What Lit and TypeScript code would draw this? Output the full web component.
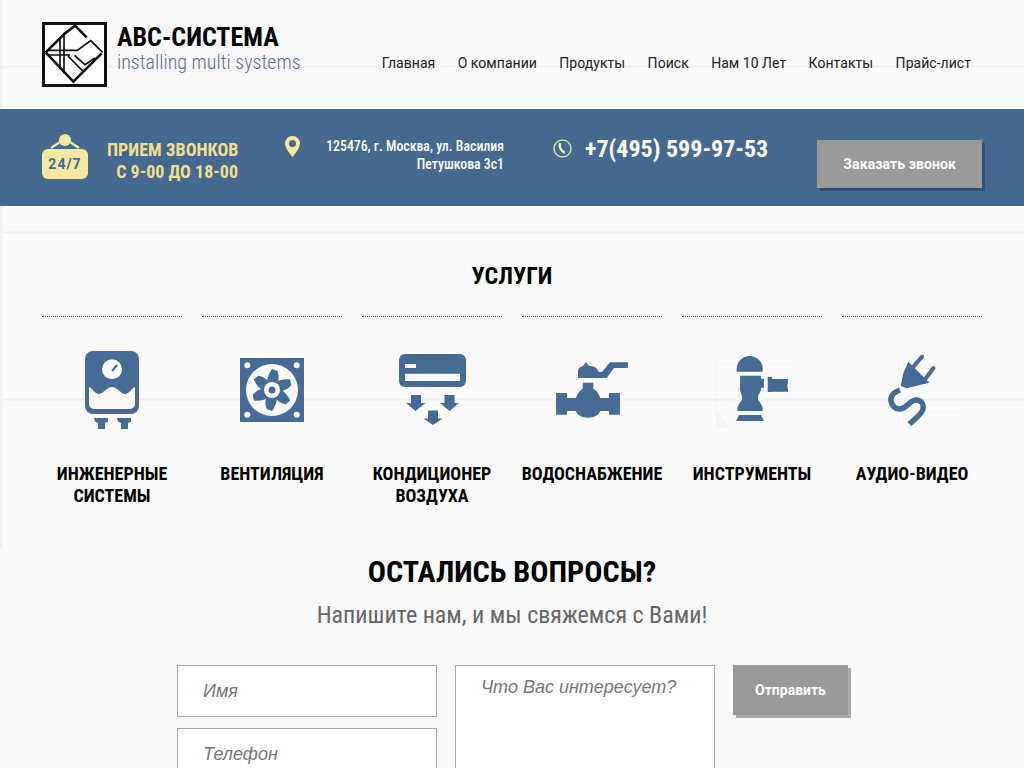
import { LitElement, html, css, svg } from "lit";
import { customElement } from "lit/decorators.js";

const INK = "#456b96";
const PAPER = "#fafafa";

/* Each icon is drawn on a 100x92 canvas centred on its column. */
const blade = "M-5 -7C-5 -12 -3 -17 0 -21L5.500 -19C7 -15 7 -11 5.500 -6.500Z";
const icons = [
  svg`<path fill="${INK}" d="M31 0h38a8 8 0 0 1 8 8v47a8 8 0 0 1-8 8H31a8 8 0 0 1-8-8V8a8 8 0 0 1 8-8z"/>
    <path fill="${PAPER}" d="M27 36c3 1 6 7 10 7s8-7 13-7 9 7 13 7 7-6 10-7v17a5 5 0 0 1-5 5H32a5 5 0 0 1-5-5z"/>
    <circle cx="50" cy="18.300" r="10" fill="${PAPER}"/><path stroke="${INK}" stroke-width="2" d="M50 20l5-6"/>
    <path fill="${INK}" d="M32 67h14v3.500l-3 1.500V78h-7v-6l-3-1.500zM55 67h14v3.500l-3 1.500V78h-7v-6l-3-1.500z"/>`,
  svg`<path fill="${INK}" d="M18 7h64v64H18z"/><circle cx="50" cy="39" r="26" fill="${PAPER}"/>
    <circle cx="25.300" cy="14.300" r="3" fill="${PAPER}"/><circle cx="74.700" cy="14.300" r="3" fill="${PAPER}"/><circle cx="25.300" cy="63.700" r="3" fill="${PAPER}"/><circle cx="74.700" cy="63.700" r="3" fill="${PAPER}"/>
    <g transform="translate(50 39)"><g fill="${INK}">${[0, 60, 120, 180, 240, 300].map((a) => svg`<path transform="rotate(${a})" d="${blade}"/>`)}</g><circle r="8" fill="${PAPER}"/><circle r="3.500" fill="${INK}"/></g>`,
  svg`<path fill="${INK}" fill-rule="evenodd" d="M23 3h55a6 6 0 0 1 6 6v21a6 6 0 0 1-6 6H23a6 6 0 0 1-6-6V9a6 6 0 0 1 6-6zM23 22.700V30h55v-7.300zM23 13v4h11v-4z"/>
    <path fill="${INK}" d="M29 44h10v8h4.500L33.500 60 24 52h5zM62.500 44h10v8H77L67.500 60 58 52h4.500zM46 59.500h10v8h4.500L51 74l-9.500-6.500H46z"/>`,
  svg`<path fill="${INK}" d="M36 27V20c0-3 2-4 5-5l3-4 3 4c4 0 8 1 9 5l1 1h3l8-9.700h18V17H72l-7.300 10z"/>
    <path fill="${INK}" d="M40.700 31.700h10.600V38c3 1.500 5 3.500 7 9H67V42h11v21.700H67V60h-8.500c-2 4-6 6.700-12.500 6.700S35.500 64 33.500 60H25v3.700H14V42h11v5h9c2-5.500 4-7.500 6.700-9z"/>`,
  svg`<g fill="#eeeeee" opacity=".55"><path d="M13 12h77v1H13zM13 12h1v65h-1zM55 8h1v70h-1zM60 8h1v70h-1zM13 77h16L13 58z"/></g><rect x="33" y="4" width="30" height="72" fill="${PAPER}" opacity=".9"/>
    <path fill="${INK}" d="M34.700 20.700V18a13 13 0 0 1 26 0v2.700zM38 24.700h21v3h3v9h-3V39l-3 6v4l2 2.500 2.500 4.500v4H35.500v-4l2.500-4.500 2-2.500v-4l-2-6zM65.700 26h4.300v2h16.300l-1 7 1 5.700H70v.300h-4.300zM37 64h22l3 6H34z"/>`,
  svg`<g fill="#eeeeee" opacity=".5"><path d="M36 2h1v75h-1zM52 60h50v1H52z"/></g>
    <path fill="${INK}" d="M46.300 10.700L67.300 31.700 58 34 44.700 37.300 38.700 35 41.300 22.300z"/>
    <path fill="none" stroke="${INK}" stroke-width="4" stroke-linecap="round" d="M50 17.300L60.200 5.500M61.300 30.700L71.500 17"/>
    <path fill="none" stroke="${INK}" stroke-width="5.500" d="M38 39C30 42 27 47 30 53C33 59 39 59 43 56C47 53 50 49 54 49C59 49 62 53 61 58C60 63 53 68 47.300 73"/>`,
];

@customElement("app-root")
export class AppRoot extends LitElement {
  static styles = css`
    :host { display: block; width: 1024px; height: 768px; overflow: hidden; font-family: Roboto, "Liberation Sans", sans-serif; color: #000; }
    .wood { background-color: #fafafa; }
    .wood-a { background-image:
        linear-gradient(90deg, #f0f0f0 0 2px, transparent 3px),
        linear-gradient(180deg, transparent 0 65px, #f0f0f0 66px 67px, transparent 68px); }
    .wood-b { background-image:
        linear-gradient(90deg, #f0f0f0 0 2px, transparent 3px),
        linear-gradient(180deg, transparent 0 25px, #efefef 26px 27px, transparent 28px),
        linear-gradient(180deg, transparent 0 192px, #efefef 193px 194px, transparent 195px); }
    header { height: 109px; box-sizing: border-box; padding: 22px 53px 0 42px; display: flex; }
    .logo { width: 65px; height: 65px; flex: none; margin-right: 10px; }
    .brand { padding-top: 1px; }
    .brand b { display: block; font-size: 26px; line-height: 28px; font-weight: 700; font-stretch: 87%; white-space: nowrap; }
    .brand span { display: block; font-size: 20px; line-height: 22px; font-weight: 300; color: #5c6f88; font-stretch: 87%; white-space: nowrap; }
    nav { margin-left: auto; display: flex; gap: 22.400px; padding-top: 32px; font-size: 14px; line-height: 18px; letter-spacing: .04px; color: #222; white-space: nowrap; }
    .bar { height: 97px; background: #45698f; display: flex; color: #fff; }
    .bar > div { flex: none; }
    .clock { margin: 25px 0 0 42px; width: 46px; }
    .hours { margin: 30px 0 0 19px; width: 131px; text-align: right; font-size: 18px; line-height: 22px; font-weight: 700; color: #f0df8e; font-stretch: 75%; white-space: nowrap; }
    .pin { margin: 27px 0 0 47px; }
    .addr { margin: 28px 0 0 0; width: 204px; text-align: right; font-size: 13.800px; line-height: 18px; font-weight: 500; font-stretch: 87%; white-space: nowrap; }
    .phone { margin: 30px 0 0 49px; }
    .num { margin: 24px 0 0 13px; font-size: 24px; line-height: 32px; font-weight: 700; font-stretch: 87%; white-space: nowrap; }
    .btn { background: #999; color: #fff; font-weight: 700; text-align: center; white-space: nowrap; }
    .call { margin: 31px 0 0 49px; width: 165px; height: 48px; line-height: 48px; font-size: 14px; letter-spacing: .1px; box-shadow: 3px 3px 0 #2f4f72; }
    .services { height: 343px; box-sizing: border-box; padding: 55px 42px 0; }
    h2 { margin: 0; text-align: center; font-size: 24px; line-height: 30px; font-weight: 700; font-stretch: 75%; }
    .grid { display: grid; grid-template-columns: repeat(6, 140px); gap: 20px; margin-top: 25px; }
    .col { border-top: 1px dotted #555; padding-top: 34px; display: flex; flex-direction: column; align-items: center; }
    .ic { width: 100px; height: 92px; display: block; }
    .col p { margin: 20px -10px 0; font-size: 18px; line-height: 22px; font-weight: 700; font-stretch: 75%; text-align: center; white-space: pre-line; }
    .ask { background: #f9f9f9; height: 219px; box-sizing: border-box; padding-top: 8px; text-align: center; }
    h3 { margin: 0; font-size: 30.200px; line-height: 30px; font-weight: 700; font-stretch: 75%; }
    .sub { margin: 13px 0 0; font-size: 24px; line-height: 30px; font-weight: 400; color: #666; font-stretch: 75%; }
    form { display: flex; gap: 18px; margin: 35px 0 0 177px; text-align: left; }
    .stack { display: flex; flex-direction: column; gap: 11px; }
    .f { box-sizing: border-box; width: 260px; height: 52px; background: #fff; border: 1px solid #aaa; padding: 0 25px; font: italic 18px/50px "Liberation Sans", sans-serif; color: #777; }
    .area { height: 180px; line-height: 42px; }
    .send { width: 115px; height: 50px; line-height: 50px; font-size: 14px; box-shadow: 3px 3px 0 #aaa; }
  `;

  render() {
    const items = ["ИНЖЕНЕРНЫЕ\nСИСТЕМЫ", "ВЕНТИЛЯЦИЯ", "КОНДИЦИОНЕР\nВОЗДУХА", "ВОДОСНАБЖЕНИЕ", "ИНСТРУМЕНТЫ", "АУДИО-ВИДЕО"];
    return html`
      <header class="wood wood-a">
        <svg class="logo" viewBox="0 0 65 65">
          <rect x="1.500" y="1.500" width="62" height="62" fill="#fff" stroke="#111" stroke-width="3"/>
          <g transform="translate(-2 -2) scale(.3333)" fill="none" stroke="#111">
            <path stroke-width="8" d="M17 97L75 40 105 17 140 52M17 97L100 185 185 100"/>
            <path stroke-width="5" d="M60 55V148M72 45V160"/>
            <path stroke-width="5" d="M22 91H112L152 62 188 97M22 105H90M84 108L130 155M104 106L135 134 165 114"/>
          </g>
        </svg>
        <div class="brand"><b>АВС-СИСТЕМА</b><span>installing multi systems</span></div>
        <nav><span>Главная</span><span>О компании</span><span>Продукты</span><span>Поиск</span><span>Нам 10 Лет</span><span>Контакты</span><span>Прайс-лист</span></nav>
      </header>
      <div class="bar">
        <div class="clock"><svg width="46" height="46" viewBox="0 0 46 46"><circle cx="23" cy="6" r="6" fill="#f3e9a0"/><path d="M18 8L9 14M28 8l9 6" stroke="#f3e9a0" stroke-width="2.500"/><rect y="15" width="46" height="30" rx="6" fill="#f3e9a0"/><text x="23" y="35" text-anchor="middle" font-family="Roboto" font-weight="700" font-size="14" letter-spacing="1" fill="#45698f">24/7</text></svg></div>
        <div class="hours">ПРИЕМ ЗВОНКОВ<br>С 9-00 ДО 18-00</div>
        <div class="pin"><svg width="15" height="22" viewBox="0 0 15 22"><path fill="#f3e9a0" fill-rule="evenodd" d="M7.500 0a7.500 7.500 0 0 1 7.500 7.500C15 12 10 18 7.500 21 5 18 0 12 0 7.500A7.500 7.500 0 0 1 7.500 0zm0 4a3.500 3.500 0 1 0 0 7 3.500 3.500 0 0 0 0-7z"/></svg></div>
        <div class="addr">125476, г. Москва, ул. Василия<br>Петушкова 3с1</div>
        <div class="phone"><svg width="19" height="19" viewBox="0 0 19 19"><circle cx="9.500" cy="9.500" r="8.500" fill="none" stroke="#cfe0a8" stroke-width="1.500"/><path fill="none" stroke="#e6edc0" stroke-width="2.500" d="M7 4c-1 4 1 8 5 10"/></svg></div>
        <div class="num">+7(495) 599-97-53</div>
        <div class="btn call">Заказать звонок</div>
      </div>
      <section class="services wood wood-b">
        <h2>УСЛУГИ</h2>
        <div class="grid">${items.map((t, i) => html`<div class="col"><svg class="ic" viewBox="0 0 100 92">${icons[i]}</svg><p>${t}</p></div>`)}</div>
      </section>
      <section class="ask">
        <h3>ОСТАЛИСЬ ВОПРОСЫ?</h3>
        <p class="sub">Напишите нам, и мы свяжемся с Вами!</p>
        <form>
          <div class="stack"><div class="f">Имя</div><div class="f">Телефон</div></div>
          <div class="f area">Что Вас интересует?</div>
          <div class="btn send">Отправить</div>
        </form>
      </section>
    `;
  }
}
